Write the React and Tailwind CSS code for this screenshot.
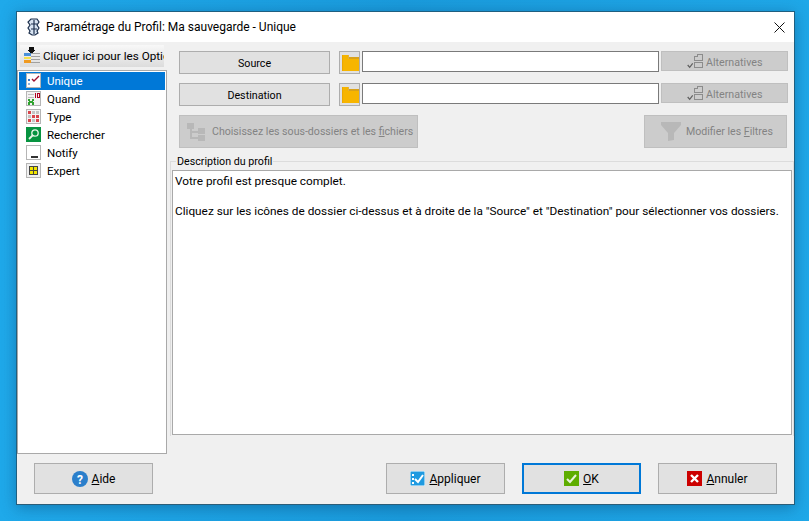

function Folder() {
  return (
    <svg width="17" height="16" viewBox="0 0 17 16" shapeRendering="crispEdges">
      <path d="M0 0h6v2h11v14H0z" fill="#f5b400" />
      <path d="M6 2h11v2H6z" fill="#d9a21a" />
      <path d="M6 0h1v4H6z" fill="#e0b040" />
      <path d="M0 0h1v16H0z" fill="#eca800" />
      <path d="M2 4h15v12H2z" fill="#f7b500" />
    </svg>
  );
}
function AltIcon() {
  return (
    <svg width="16" height="16" viewBox="0 0 16 16" fill="none" shapeRendering="crispEdges" className="shrink-0">
      <path d="M7.5 7.5v-4h3v-2h5v6z" stroke="#8c8c8c" />
      <path d="M7.5 9.5h8v5h-8z" stroke="#8c8c8c" />
      <path d="M0.7 12l2 2.4 3-4" stroke="#5f5f5f" strokeWidth="1.2" shapeRendering="auto" />
    </svg>
  );
}
function Alt() {
  return (
    <div className="w-[127px] h-[20px] bg-[#cccccc] border border-[#bfbfbf] flex items-center pl-[25px] text-[#838383] text-[10.7px]">
      <AltIcon />
      <span className="ml-[3px] mt-[3px]">Alternatives</span>
    </div>
  );
}
function PathRow({ label }) {
  return (
    <div className="flex items-start h-[23px]">
      <div className="w-[151px] h-[23px] bg-[#e1e1e1] border border-[#adadad] flex items-center justify-center text-black text-[10.7px]"><span className="mt-[2px]">{label}</span></div>
      <div className="ml-[9px] w-[21px] h-[23px] bg-[#e1e1e1] border border-[#adadad] flex items-center justify-center pl-[2px]">
        <Folder />
      </div>
      <div className="ml-[2px] w-[297px] h-[21px] bg-white border border-[#7a7a7a]"></div>
      <div className="ml-[2px]"><Alt /></div>
    </div>
  );
}
function Row({ icon, label, active }) {
  return (
    <div className={"h-[18px] flex items-center pl-[7px] text-[11.5px] " + (active ? "bg-[#0078d7] text-white" : "text-black")}>
      <span className="w-[15px] h-[15px] flex items-center justify-center">{icon}</span>
      <span className="ml-[6px] mt-[1px]">{label}</span>
    </div>
  );
}
const Frame = ({ children, bg = "#ffffff" }) => (
  <svg width="15" height="15" viewBox="0 0 15 15" shapeRendering="crispEdges">
    <rect x="0.5" y="0.5" width="14" height="14" fill={bg} stroke="#b5b5b5" />
    {children}
  </svg>
);
const icons = {
  unique: (
    <Frame>
      <rect x="2" y="6" width="2" height="2" fill="#3b78c8" />
      <rect x="2" y="10" width="2" height="2" fill="#8cb4e4" />
      <path d="M6 6l2 2 5-5" fill="none" stroke="#a01030" strokeWidth="1.4" shapeRendering="auto" />
    </Frame>
  ),
  quand: (
    <Frame bg="#f2f2f2">
      <path d="M2 3h6v1H2zM2 6h6v1H2z" fill="#bdbdbd" />
      <path d="M9 2h1v5H9zM11 2h3v5h-3z" fill="#b00020" />
      <rect x="12" y="3" width="1" height="3" fill="#f2f2f2" />
      <path d="M2 8h2v2h2V8h2v2H7v1h1v3H6v-2H4v2H2v-3h1v-1H2z" fill="#2fa32f" />
    </Frame>
  ),
  type: (
    <Frame bg="#f4f4f4">
      {[2, 6, 10].flatMap((y) => [2, 6, 10].map((x) => {
        const red = (x === 2 && y === 2) || (x === 6 && y === 6) || (x === 10 && y === 10) || (x === 10 && y === 6) || (x === 2 && y === 10);
        return <rect key={x + "-" + y} x={x} y={y} width="3" height="3" fill={red ? "#d8454c" : "#c4c4c4"} />;
      }))}
    </Frame>
  ),
  search: (
    <svg width="15" height="15" viewBox="0 0 15 15">
      <rect width="15" height="15" fill="#079340" />
      <circle cx="9" cy="6" r="3.2" fill="none" stroke="#e8f5e8" strokeWidth="1.3" />
      <path d="M7 8l-4 4" stroke="#e8f5e8" strokeWidth="1.8" />
    </svg>
  ),
  notify: (
    <Frame>
      <rect x="5" y="11" width="7" height="2" fill="#333333" />
    </Frame>
  ),
  expert: (
    <Frame bg="#f0f0f0">
      <rect x="3.5" y="3.5" width="8" height="8" fill="#f2e600" stroke="#444444" />
      <path d="M7.5 3v8M3 7.5h8" stroke="#444444" />
    </Frame>
  ),
};
function Btn({ icon, children, primary }) {
  return (
    <div className={"w-[119px] h-[31px] bg-[#e1e1e1] flex items-center justify-center gap-[4px] text-black " + (primary ? "border-2 border-[#0078d7]" : "border border-[#adadad]")}>
      {icon}
      <span className="mt-[1px]">{children}</span>
    </div>
  );
}
export default function App() {
  return (
    <div className="w-[809px] h-[521px] overflow-hidden bg-[linear-gradient(to_right,#1fa9ea,#1a9bdc_50%,#1fa8e8)] pl-[16px] pt-[11px] text-[12px] leading-[16px] font-['Roboto','Open_Sans',sans-serif]">
      <div className="w-[779px] h-[494px] bg-[#f0f0f0] border border-[#1f5f80] border-b-[#2b5d78] shadow-[0_3px_14px_rgba(0,40,80,0.35)] flex flex-col">
        <div className="h-[30px] bg-white flex items-center pl-[10px] shrink-0">
          <svg width="14" height="18" viewBox="0 0 14 18" fill="none">
            <path d="M4 1h6l2 3-2 3 2 3-2 3 1 2-3 2H5l-3-2 1-2-2-3 2-3-2-3z" fill="#d8e4f2" stroke="#1c2f4c" strokeWidth="1.2" />
            <path d="M4 6h6M4 11h6M7 2v14" stroke="#1c2f4c" strokeWidth="1.2" />
          </svg>
          <span className="ml-[5px] text-black">Paramétrage du Profil: Ma sauvegarde - Unique</span>
          <svg className="ml-auto mr-[9px]" width="11" height="11" viewBox="0 0 11 11">
            <path d="M0.5 0.5l10 10M10.5 0.5l-10 10" stroke="#111111" strokeWidth="1" />
          </svg>
        </div>
        <div className="flex-1 flex min-h-0">
          <div className="w-[150px] shrink-0 flex flex-col">
            <div className="mt-[3px] mx-[3px] h-[22px] bg-[linear-gradient(to_bottom,#f8f8f8,#dcdcdc)] flex items-center pl-[4px] overflow-hidden whitespace-nowrap text-black text-[11.7px]">
              <svg className="shrink-0" width="16" height="18" viewBox="0 0 16 18" shapeRendering="crispEdges">
                <path d="M5 0h5v3h2l-4.5 4L3 3h2z" fill="#111111" />
                <rect x="0" y="6" width="7" height="3" fill="#4a90d8" />
                <rect x="0" y="10" width="7" height="2" fill="#f5e04a" />
                <rect x="0" y="13" width="7" height="3" fill="#f09a20" />
                <path d="M7 6h9v1H7zM7 9h9v1H7zM7 12h9v1H7zM7 15h9v1H7z" fill="#a0a0a0" />
              </svg>
              <span className="ml-[3px] mt-[1px]">Cliquer ici pour les Options</span>
            </div>
            <div className="mt-[3px] h-[385px] bg-white border border-[#a9a9a9] p-[1px]">
              <Row icon={icons.unique} label="Unique" active />
              <Row icon={icons.quand} label="Quand" />
              <Row icon={icons.type} label="Type" />
              <Row icon={icons.search} label="Rechercher" />
              <Row icon={icons.notify} label="Notify" />
              <Row icon={icons.expert} label="Expert" />
            </div>
          </div>
          <div className="flex-1 min-w-0 flex flex-col">
            <div className="pl-[12px] pt-[9px] flex flex-col gap-[9px]">
              <PathRow label="Source" />
              <PathRow label="Destination" />
            </div>
            <div className="pl-[12px] pt-[9px] flex justify-between pr-[7px]">
              <div className="w-[239px] h-[33px] bg-[#cccccc] border border-[#bfbfbf] flex items-center pl-[7px] text-[#838383] whitespace-nowrap text-[10.6px]">
                <svg width="19" height="18" viewBox="0 0 19 18" shapeRendering="crispEdges" className="shrink-0">
                  <rect x="0" y="0" width="7" height="6" fill="#b8b8b8" />
                  <rect x="3" y="6" width="2" height="9" fill="#b8b8b8" />
                  <rect x="3" y="8" width="8" height="2" fill="#b8b8b8" />
                  <rect x="3" y="14" width="8" height="2" fill="#b8b8b8" />
                  <rect x="11" y="5" width="7" height="6" fill="#b8b8b8" />
                  <rect x="11" y="12" width="7" height="6" fill="#b8b8b8" />
                </svg>
                <span className="ml-[6px]">Choisissez les sous-dossiers et les <span className="underline">f</span>ichiers</span>
              </div>
              <div className="w-[143px] h-[33px] bg-[#cccccc] border border-[#bfbfbf] flex items-center pl-[16px] text-[#838383] whitespace-nowrap text-[10.6px]">
                <svg width="20" height="19" viewBox="0 0 20 19" className="shrink-0">
                  <path d="M0 0h20v3l-7 8v7l-6 1v-8L0 3z" fill="#b8b8b8" />
                </svg>
                <span className="ml-[5px]">Modifier les <span className="underline">F</span>iltres</span>
              </div>
            </div>
            <div className="relative mt-[13px] ml-[3px] h-[275px] border border-[#dcdcdc] border-b-0 pt-[8px] pl-[1px] pr-[1px]">
              <span className="absolute left-[5px] top-[-8px] bg-[#f0f0f0] px-[1px] text-black text-[10.7px]">Description du profil</span>
              <div className="h-[265px] bg-white border border-[#a9a9a9] pl-[2px] pt-[3px] text-black whitespace-nowrap text-[11.8px] leading-[15px]">
                <p>Votre profil est presque complet.</p>
                <p className="mt-[15px]">Cliquez sur les icônes de dossier ci-dessus et à droite de la "Source" et "Destination" pour sélectionner vos dossiers.</p>
              </div>
            </div>
          </div>
        </div>
        <div className="h-[50px] shrink-0 flex items-start pt-[9px] pl-[17px]">
          <Btn icon={
            <svg width="16" height="16" viewBox="0 0 16 16"><circle cx="8" cy="8" r="8" fill="#2b7fcb" /><text x="8" y="12.5" textAnchor="middle" fontSize="12" fontWeight="700" fill="#ffffff">?</text></svg>
          }><span className="underline">A</span>ide</Btn>
          <div className="ml-[233px]">
            <Btn icon={
              <svg width="15" height="15" viewBox="0 0 15 15"><rect width="15" height="15" fill="#1f9ae0" stroke="#ffffff" strokeWidth="1" /><rect x="2" y="3" width="2" height="2" fill="#ffffff" /><rect x="2" y="7" width="2" height="2" fill="#ffffff" /><rect x="2" y="11" width="2" height="2" fill="#ffffff" /><path d="M5 8l3 3 5-7" fill="none" stroke="#ffffff" strokeWidth="2" /></svg>
            }><span className="underline">A</span>ppliquer</Btn>
          </div>
          <div className="ml-[17px]">
            <Btn primary icon={
              <svg width="15" height="15" viewBox="0 0 15 15"><rect width="15" height="15" fill="#5ead00" /><path d="M3 8l3 3 6-7" fill="none" stroke="#e8f3da" strokeWidth="2" /></svg>
            }><span className="underline">O</span>K</Btn>
          </div>
          <div className="ml-[17px]">
            <Btn icon={
              <svg width="15" height="15" viewBox="0 0 15 15"><rect width="15" height="15" fill="#cc0000" /><path d="M4 4l7 7M11 4l-7 7" stroke="#ffffff" strokeWidth="2.4" /></svg>
            }><span className="underline">A</span>nnuler</Btn>
          </div>
        </div>
      </div>
    </div>
  );
}
